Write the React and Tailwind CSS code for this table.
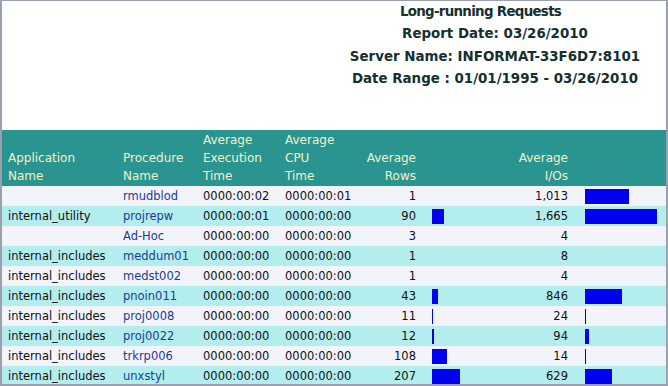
import React from "react";

const rows = [
  ["", "rmudblod", "0000:00:02", "0000:00:01", 1, "1,013", 1013],
  ["internal_utility", "projrepw", "0000:00:01", "0000:00:00", 90, "1,665", 1665],
  ["", "Ad-Hoc", "0000:00:00", "0000:00:00", 3, "4", 4],
  ["internal_includes", "meddum01", "0000:00:00", "0000:00:00", 1, "8", 8],
  ["internal_includes", "medst002", "0000:00:00", "0000:00:00", 1, "4", 4],
  ["internal_includes", "pnoin011", "0000:00:00", "0000:00:00", 43, "846", 846],
  ["internal_includes", "proj0008", "0000:00:00", "0000:00:00", 11, "24", 24],
  ["internal_includes", "proj0022", "0000:00:00", "0000:00:00", 12, "94", 94],
  ["internal_includes", "trkrp006", "0000:00:00", "0000:00:00", 108, "14", 14],
  ["internal_includes", "unxstyl", "0000:00:00", "0000:00:00", 207, "629", 629],
];

function barW(v, max, w) {
  return Math.round((v / max) * w);
}

const grid = "grid grid-cols-[115px_80px_82px_68px_75px_76px_76px_1fr]";

export default function App() {
  return (
    <div
      className="w-[668px] h-[386px] overflow-hidden bg-white border-t border-l-2 border-r-2 border-b-2 border-[#9aa0ae] flex flex-col"
      style={{ fontFamily: '"DejaVu Sans", Verdana, sans-serif' }}
    >
      <div className="h-[129px] shrink-0 flex justify-end pr-[8px]">
        <div className="w-[326px] flex flex-col items-center text-[13.4px] font-bold text-[#15302e] leading-[22.4px]">
          <div className="pr-[29px] tracking-[-0.7px]">Long-running Requests</div>
          <div>Report Date: 03/26/2010</div>
          <div>Server Name: INFORMAT-33F6D7:8101</div>
          <div>Date Range : 01/01/1995 - 03/26/2010</div>
        </div>
      </div>
      <div className={`${grid} shrink-0 bg-[#2a9490] text-[#f2f2c6] text-[12px] leading-[18px] h-[56px] items-end pb-[1px]`}>
        <div className="pl-[6px]">Application<br />Name</div>
        <div className="pl-[6px]">Procedure<br />Name</div>
        <div className="pl-[6px]">Average<br />Execution<br />Time</div>
        <div className="pl-[6px]">Average<br />CPU<br />Time</div>
        <div className="text-right pr-[6px]">Average<br />Rows</div>
        <div></div>
        <div className="text-right pr-[6px]">Average<br />I/Os</div>
        <div></div>
      </div>
      {rows.map((r, i) => (
        <div
          key={i}
          className={`${grid} shrink-0 h-[20px] items-center text-[11.5px] text-[#111111] ${i % 2 === 0 ? "bg-[#f3f3fa]" : "bg-[#b3eded]"}`}
        >
          <div className="pl-[6px] pt-[2px] whitespace-nowrap">{r[0]}</div>
          <div className="pl-[6px] pt-[2px] text-[#1b3c93] whitespace-nowrap">{r[1]}</div>
          <div className="pl-[6px] pt-[2px] whitespace-nowrap">{r[2]}</div>
          <div className="pl-[6px] pt-[2px] whitespace-nowrap">{r[3]}</div>
          <div className="text-right pr-[6px] pt-[2px]">{r[4]}</div>
          <div className="pl-[10px] flex items-center">
            <div className="h-[15px] bg-[#0000f0]" style={{ width: barW(r[4], 207, 28) + "px" }} />
          </div>
          <div className="text-right pr-[6px] pt-[2px]">{r[5]}</div>
          <div className="pl-[11px] flex items-center">
            <div className="h-[15px] bg-[#0000f0]" style={{ width: barW(r[6], 1665, 72) + "px" }} />
          </div>
        </div>
      ))}
    </div>
  );
}
